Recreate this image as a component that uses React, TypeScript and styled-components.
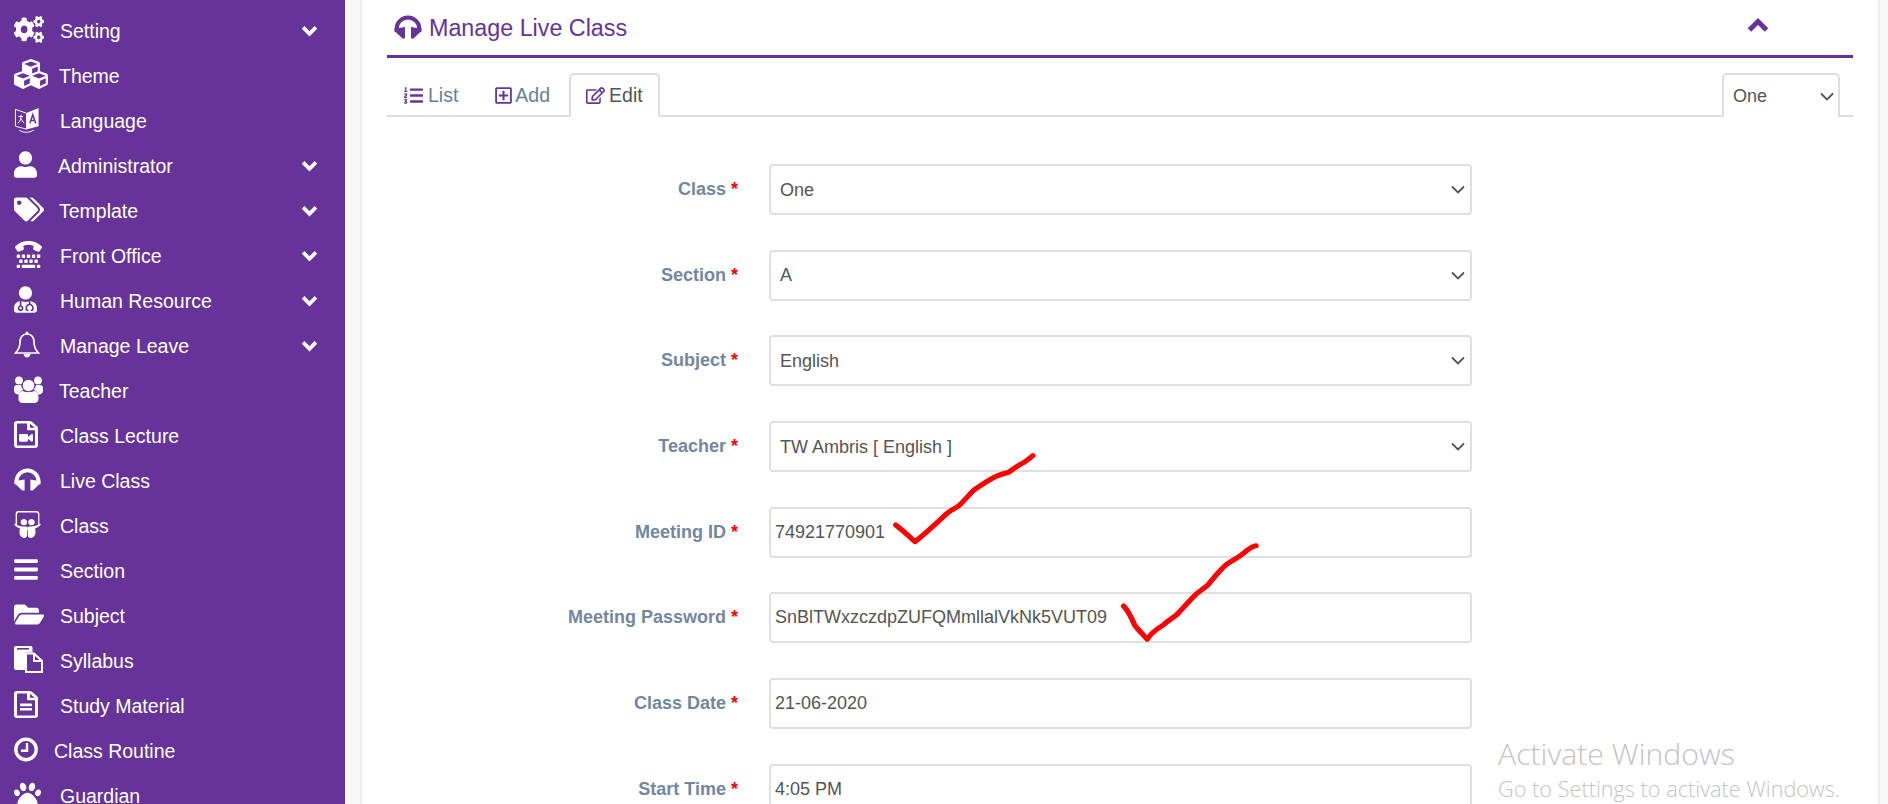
import React from "react";
import styled, { createGlobalStyle } from "styled-components";
import {
  FaBars,
  FaCogs,
  FaCubes,
  FaFolderOpen,
  FaListOl,
  FaPaw,
  FaRegEdit,
  FaRegFileAlt,
  FaRegFileVideo,
  FaRegPlusSquare,
  FaSlideshare,
  FaTags,
  FaTty,
  FaUser,
  FaUserMd,
} from "react-icons/fa";

const PURPLE = "#663399";

// select arrow, same thin chevron as the browser draws on the reference
const ARROW =
  "url(\"data:image/svg+xml,%3Csvg xmlns='http://www.w3.org/2000/svg' viewBox='0 0 14 9'%3E%3Cpath d='M1 1.5 L7 7.5 L13 1.5' fill='none' stroke='%23555' stroke-width='1.8'/%3E%3C/svg%3E\")";

const LanguageIcon = () => (
  <svg viewBox="0 0 26 28" fill="none">
    <path d="M1 3.5 L12.5 7.5 V24 L1 21 Z" stroke="#fff" strokeWidth="1" />
    <path d="M13 7 L25 2 V21 L13 24 Z" fill="#fff" />
    <path d="M16 18 L19 9 L22 18 M17 15 H21" stroke={PURPLE} strokeWidth="1.6" />
    <path d="M4 11 H9 M7 9 C7 13 6 16 3.5 18 M6.5 13 L10 18" stroke="#fff" strokeWidth="1" />
    <path d="M5 25 C9 28 15 28 20 25" stroke="#fff" strokeWidth="1" />
  </svg>
);

const HeadphonesIcon = () => (
  <svg viewBox="0 0 28 24" fill="none">
    <path d="M2.6 17 V14 A11.4 11.4 0 0 1 25.4 14 V17" stroke="currentColor" strokeWidth="4" />
    <path d="M11 12 V23.5 H8.5 L0.6 16 V13 H5 Z" fill="currentColor" />
    <path d="M17 12 V23.5 H19.5 L27.4 16 V13 H23 Z" fill="currentColor" />
  </svg>
);

const BellIcon = () => (
  <svg viewBox="0 0 26 27" fill="none">
    <path
      d="M13 3 C8 3 6 7 6 11 C6 16 4.5 19 1.5 22 H24.5 C21.5 19 20 16 20 11 C20 7 18 3 13 3 Z"
      stroke="currentColor"
      strokeWidth="1.7"
    />
    <circle cx="13" cy="2.2" r="1.6" fill="currentColor" />
    <path d="M9.5 23 C10 27.5 16 27.5 16.5 23 Z" fill="currentColor" />
  </svg>
);

const UsersIcon = () => (
  <svg viewBox="0 0 29 27" fill="currentColor">
    <circle cx="14.5" cy="9.5" r="5.8" />
    <circle cx="5" cy="4.4" r="3.9" />
    <circle cx="24" cy="4.4" r="3.9" />
    <path d="M0 12 C0 9.5 2 9 3.5 9 H7 C7.4 11 8 12.5 9.5 13.8 C6.5 14.8 5.3 16.5 4.8 18.5 C2 18.5 0 17 0 14.5 Z" />
    <path d="M29 12 C29 9.5 27 9 25.5 9 H22 C21.6 11 21 12.5 19.5 13.8 C22.5 14.8 23.7 16.5 24.2 18.5 C27 18.5 29 17 29 14.5 Z" />
    <path d="M9 15 C11 16.6 18 16.6 20 15 C23 15 24.5 17.5 24.5 21 V23 C24.5 25.5 22.5 27 20.5 27 H8.5 C6.5 27 4.5 25.5 4.5 23 V21 C4.5 17.5 6 15 9 15 Z" />
  </svg>
);

const SyllabusIcon = () => (
  <svg viewBox="0 0 29 27" fill="currentColor">
    <path d="M0 2 C0 .8 .8 0 2 0 H16.5 C17.7 0 18.5 .8 18.5 2 V6.5 H11 V24 H2 C.8 24 0 23.2 0 22 Z" fill="currentColor" />
    <rect x="3" y="2" width="12" height="1.6" fill="#663399" />
    <path d="M12 7.5 H20 L28 15 V26 H12 Z" fill="#663399" stroke="currentColor" strokeWidth="2" />
    <path d="M20 7.5 V15 H28" stroke="currentColor" strokeWidth="2" fill="none" />
  </svg>
);

const ClockIcon = () => (
  <svg viewBox="0 0 24 24" fill="none">
    <circle cx="12" cy="12" r="10.2" stroke="currentColor" strokeWidth="3.4" />
    <path d="M13 5.5 V13.2 H7" stroke="currentColor" strokeWidth="2.4" />
  </svg>
);

const Chevron = ({ up }: { up?: boolean }) => (
  <svg viewBox="0 0 18 12" fill="none">
    <path d={up ? "M2 10.5 L9 3.5 L16 10.5" : "M2 1.5 L9 8.5 L16 1.5"} stroke="currentColor" strokeWidth="4" />
  </svg>
);

const menu = [
  { label: "Setting", icon: <FaCogs preserveAspectRatio="none" />, textLeft: 60, iconWidth: 30, more: true },
  { label: "Theme", icon: <FaCubes />, textLeft: 59, iconWidth: 34, iconHeight: 34 },
  { label: "Language", icon: <LanguageIcon />, textLeft: 60, iconWidth: 26 },
  { label: "Administrator", icon: <FaUser />, textLeft: 58, iconWidth: 23, more: true },
  { label: "Template", icon: <FaTags />, textLeft: 59, iconWidth: 30, more: true },
  { label: "Front Office", icon: <FaTty />, textLeft: 60, iconWidth: 29, more: true },
  { label: "Human Resource", icon: <FaUserMd />, textLeft: 60, iconWidth: 23, more: true },
  { label: "Manage Leave", icon: <BellIcon />, textLeft: 60, iconWidth: 26, more: true },
  { label: "Teacher", icon: <UsersIcon />, textLeft: 59, iconWidth: 29 },
  { label: "Class Lecture", icon: <FaRegFileVideo preserveAspectRatio="none" />, textLeft: 60, iconWidth: 24 },
  { label: "Live Class", icon: <HeadphonesIcon />, textLeft: 60, iconWidth: 27 },
  { label: "Class", icon: <FaSlideshare />, textLeft: 60, iconWidth: 27 },
  { label: "Section", icon: <FaBars />, textLeft: 60, iconWidth: 24 },
  { label: "Subject", icon: <FaFolderOpen />, textLeft: 60, iconWidth: 30 },
  { label: "Syllabus", icon: <SyllabusIcon />, textLeft: 60, iconWidth: 29 },
  { label: "Study Material", icon: <FaRegFileAlt preserveAspectRatio="none" />, textLeft: 60, iconWidth: 24 },
  { label: "Class Routine", icon: <ClockIcon />, textLeft: 54, iconWidth: 24 },
  { label: "Guardian", icon: <FaPaw />, textLeft: 60, iconWidth: 27 },
];

const fields = [
  { label: "Class", value: "One", select: true },
  { label: "Section", value: "A", select: true },
  { label: "Subject", value: "English", select: true },
  { label: "Teacher", value: "TW Ambris [ English ]", select: true },
  { label: "Meeting ID", value: "74921770901" },
  { label: "Meeting Password", value: "SnBlTWxzczdpZUFQMmllalVkNk5VUT09" },
  { label: "Class Date", value: "21-06-2020" },
  { label: "Start Time", value: "4:05 PM" },
];

const App = () => (
  <Page>
    <GlobalStyle />
    <Sidebar>
      {menu.map((item) => (
        <MenuRow key={item.label}>
          <MenuIcon $textLeft={item.textLeft} $iconWidth={item.iconWidth} $iconHeight={item.iconHeight}>
            {item.icon}
          </MenuIcon>
          <MenuLabel>{item.label}</MenuLabel>
          {item.more && (
            <MenuArrow>
              <Chevron />
            </MenuArrow>
          )}
        </MenuRow>
      ))}
    </Sidebar>
    <Content>
      <Panel>
        <PanelHeader>
          <PanelTitle>
            <HeadphonesIcon />
            Manage Live Class
          </PanelTitle>
          <Collapse>
            <Chevron up />
          </Collapse>
        </PanelHeader>
        <Tabs>
          <Tab $gap={5}>
            <FaListOl />
            List
          </Tab>
          <Tab $gap={2}>
            <FaRegPlusSquare />
            Add
          </Tab>
          <Tab $active $gap={4}>
            <FaRegEdit />
            Edit
          </Tab>
          <ClassTab>
            <ClassSelect defaultValue="One">
              <option>One</option>
            </ClassSelect>
          </ClassTab>
        </Tabs>
        <Form>
          {fields.map((field) => (
            <React.Fragment key={field.label}>
              <FieldLabel>
                {field.label} <Required>*</Required>
              </FieldLabel>
              {field.select ? (
                <FieldSelect defaultValue={field.value}>
                  <option>{field.value}</option>
                </FieldSelect>
              ) : (
                <FieldInput type="text" defaultValue={field.value} />
              )}
            </React.Fragment>
          ))}
        </Form>
      </Panel>
    </Content>

    {/* red ticks somebody drew on top of the screenshot */}
    <Ticks viewBox="0 0 1568 690" preserveAspectRatio="none" fill="none">
      <path d="M436 285 C455 300 470 315 490 335 C510 320 550 280 580 250 C590 240 605 235 615 225 C630 210 640 195 655 180 C675 165 695 150 715 140 C730 132 745 130 755 125 C765 118 775 108 790 100 C800 95 810 85 820 77" />
      <path d="M1074 528 C1085 540 1095 560 1105 585 C1115 600 1130 615 1140 628 C1150 610 1170 595 1185 585 C1195 575 1210 565 1222 555 C1240 535 1260 510 1280 490 C1290 480 1300 475 1310 465 C1325 445 1340 425 1360 405 C1380 390 1400 380 1415 365 C1425 358 1430 350 1445 347" />
    </Ticks>

    <Watermark>
      <WatermarkTitle>Activate Windows</WatermarkTitle>
      <WatermarkHint>Go to Settings to activate Windows.</WatermarkHint>
    </Watermark>
  </Page>
);

export default App;

const GlobalStyle = createGlobalStyle`
  html, body {
    margin: 0;
    height: 100%;
    overflow: hidden;
  }
  body {
    font-family: "Liberation Sans", Arial, sans-serif;
  }
  * {
    box-sizing: border-box;
  }
`;

const Page = styled.div`
  display: flex;
  height: 804px;
  overflow: hidden;
  position: relative;
`;

const Sidebar = styled.nav`
  width: 345px;
  flex-shrink: 0;
  height: 100%;
  padding-top: 8.5px;
  overflow: hidden;
  background: ${PURPLE};
  color: #fff;
`;

const MenuRow = styled.div`
  display: flex;
  align-items: center;
  height: 45px;
  padding: 0 27px 0 14px;
`;

const MenuIcon = styled.span<{ $textLeft: number; $iconWidth: number; $iconHeight?: number }>`
  width: ${(p) => p.$textLeft - 14}px;
  flex-shrink: 0;
  display: flex;
  align-items: center;
  height: 27px;
  margin-top: -4px;

  svg {
    flex-shrink: 0;
    width: ${(p) => p.$iconWidth}px;
    height: ${(p) => p.$iconHeight ?? 27}px;
  }
`;

const MenuLabel = styled.span`
  font-size: 19.5px;
  white-space: nowrap;
`;

const MenuArrow = styled.span`
  margin-left: auto;
  display: flex;

  svg {
    width: 17px;
    height: 11px;
  }
`;

const Content = styled.main`
  flex: 1;
  min-width: 0;
  background: #f8f8f8;
  padding: 0 8px 0 15px;
`;

const Panel = styled.section`
  height: 100%;
  padding: 0 25px;
  background: #fff;
  border-left: 2px solid #eceef3;
  border-right: 2px solid #eceef3;
`;

const PanelHeader = styled.header`
  display: flex;
  align-items: center;
  justify-content: space-between;
  height: 58px;
  padding: 0 84px 0 7px;
  border-bottom: 3px solid ${PURPLE};
`;

const PanelTitle = styled.h3`
  display: flex;
  align-items: center;
  gap: 7px;
  margin: 0;
  padding-top: 2px;
  font-size: 23.3px;
  font-weight: 400;
  color: ${PURPLE};

  svg {
    width: 28px;
    height: 24px;
    margin-top: -4px;
  }
`;

const Collapse = styled.span`
  display: flex;
  margin-top: -6px;
  color: ${PURPLE};

  svg {
    width: 22px;
    height: 15px;
  }
`;

const Tabs = styled.div`
  display: flex;
  align-items: flex-end;
  gap: 2px;
  height: 59px;
  border-bottom: 2px solid #ddd;
`;

const Tab = styled.a<{ $active?: boolean; $gap: number }>`
  display: flex;
  align-items: center;
  gap: ${(p) => p.$gap}px;
  height: 44px;
  margin-bottom: -2px;
  padding: 0 15px;
  font-size: 19.5px;
  color: ${(p) => (p.$active ? "#555" : "#6a7f99")};
  background: ${(p) => (p.$active ? "#fff" : "transparent")};
  border: 2px solid ${(p) => (p.$active ? "#ddd" : "transparent")};
  border-bottom-color: ${(p) => (p.$active ? "#fff" : "transparent")};
  border-radius: 5px 5px 0 0;

  svg {
    width: auto;
    height: 19px;
    color: ${PURPLE};
  }
`;

const ClassTab = styled.div`
  display: flex;
  align-items: center;
  width: 118px;
  height: 44px;
  margin: 0 13px -2px auto;
  background: #fff;
  border: 2px solid #ddd;
  border-bottom: 0;
  border-radius: 5px 5px 0 0;
`;

const ClassSelect = styled.select`
  appearance: none;
  width: 100%;
  height: 100%;
  padding: 0 0 0 9px;
  border: 0;
  outline: 0;
  background: transparent ${ARROW} no-repeat right 4px center / 14px 9px;
  font: 18px "Liberation Sans", Arial, sans-serif;
  color: #555;
`;

const Form = styled.form`
  display: grid;
  grid-template-columns: 351px 703px;
  column-gap: 31px;
  row-gap: 34.7px;
  align-items: center;
  padding-top: 47px;
`;

const FieldLabel = styled.label`
  text-align: right;
  font-size: 18px;
  font-weight: 700;
  color: #73879f;
`;

const Required = styled.span`
  color: #f00;
`;

const FieldSelect = styled.select`
  appearance: none;
  height: 51px;
  padding: 0 9px;
  background: #fff ${ARROW} no-repeat right 5px center / 14px 9px;
  border: 2px solid #e0e0e0;
  border-radius: 4px;
  font: 18px "Liberation Sans", Arial, sans-serif;
  color: #555;
`;

const FieldInput = styled.input`
  height: 51px;
  padding: 0 4px;
  background: #fff;
  border: 2px solid #e0e0e0;
  border-radius: 4px;
  font: 18px "Liberation Sans", Arial, sans-serif;
  color: #555;
`;

const Ticks = styled.svg`
  position: absolute;
  left: 740px;
  top: 430px;
  width: 560px;
  height: 230px;
  pointer-events: none;

  path {
    stroke: #f00;
    stroke-width: 15;
    stroke-linecap: round;
    stroke-linejoin: round;
  }
`;

const Watermark = styled.div`
  position: absolute;
  left: 1498px;
  top: 736px;
  font-family: "Open Sans", "Noto Sans", sans-serif;
  font-weight: 300;
  color: #c4c4c4;
  pointer-events: none;
`;

const WatermarkTitle = styled.div`
  font-size: 30.2px;
  line-height: 36px;
`;

const WatermarkHint = styled.div`
  margin-top: 3px;
  font-size: 21.7px;
  line-height: 28px;
`;
